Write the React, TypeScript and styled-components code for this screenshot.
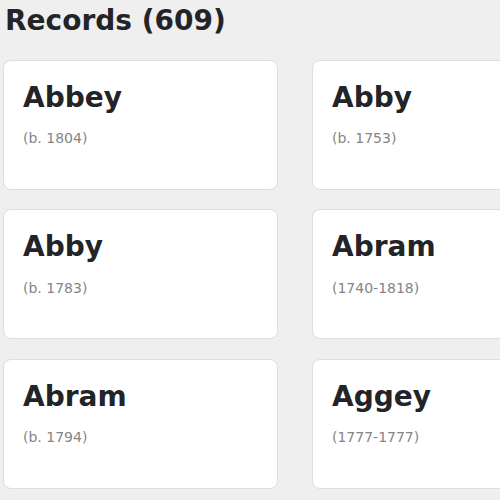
import React from "react";
import styled, { createGlobalStyle } from "styled-components";

interface Record {
  name: string;
  dates: string;
}

const records: Record[] = [
  { name: "Abbey", dates: "(b. 1804)" },
  { name: "Abby", dates: "(b. 1753)" },
  { name: "Abby", dates: "(b. 1783)" },
  { name: "Abram", dates: "(1740-1818)" },
  { name: "Abram", dates: "(b. 1794)" },
  { name: "Aggey", dates: "(1777-1777)" },
];

const GlobalStyle = createGlobalStyle`
  html, body {
    margin: 0;
    padding: 0;
    overflow: hidden;
    background: #efefef;
  }
  body {
    font-family: "DejaVu Sans", "Liberation Sans", sans-serif;
    color: #222428;
  }
`;

const Page = styled.div`
  box-sizing: border-box;
  width: 500px;
  height: 500px;
  overflow: hidden;
  padding: 4px 0 0 3px;
`;

const Heading = styled.h1`
  margin: 0 0 22px 2px;
  font-size: 28px;
  line-height: 1.2;
  font-weight: 700;
`;

const Grid = styled.div`
  display: grid;
  grid-template-columns: repeat(2, 275px);
  column-gap: 34px;
  row-gap: 19.5px;
`;

const Card = styled.div`
  box-sizing: border-box;
  height: 130px;
  background: #fff;
  border: 1px solid #dedede;
  border-radius: 8px;
  padding: 20px 19px;
`;

const Name = styled.div`
  font-size: 28px;
  line-height: 1.2;
  font-weight: 700;
`;

const Dates = styled.div`
  margin-top: 16px;
  font-size: 14px;
  line-height: 1.2;
  color: #858585;
`;

export default function App() {
  return (
    <>
      <GlobalStyle />
      <Page>
        <Heading>Records (609)</Heading>
        <Grid>
          {records.map((r, i) => (
            <Card key={i}>
              <Name>{r.name}</Name>
              <Dates>{r.dates}</Dates>
            </Card>
          ))}
        </Grid>
      </Page>
    </>
  );
}
